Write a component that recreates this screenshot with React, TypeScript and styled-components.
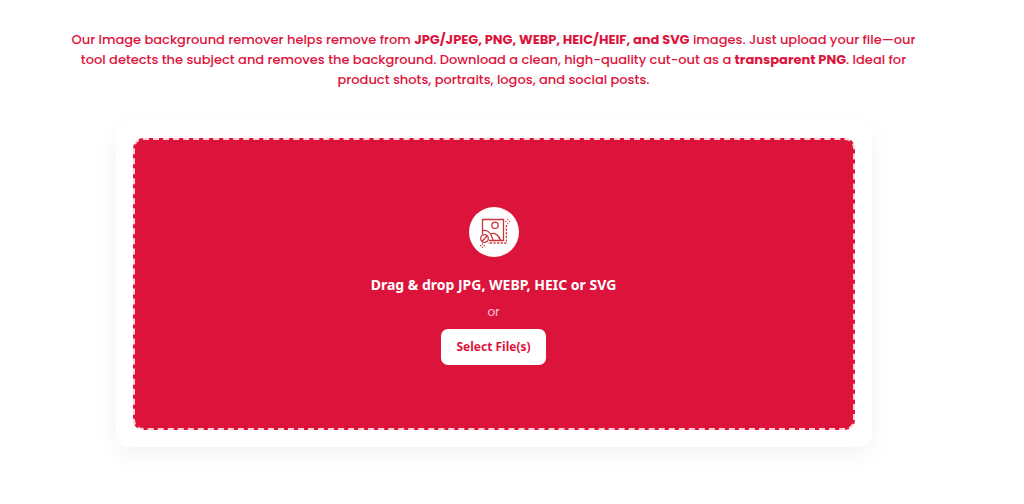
import React, { useRef } from "react";
import styled, { createGlobalStyle } from "styled-components";

const GlobalStyle = createGlobalStyle`
  *, *::before, *::after { box-sizing: border-box; }
  body {
    margin: 0;
    background: #fff;
    color: #dc143c;
    font-family: Poppins, Inter, sans-serif;
  }
`;

const Page = styled.main`
  display: flex;
  flex-direction: column;
  align-items: center;
  gap: 31px;
  padding: 30px 37px 56px 0;
`;

const Intro = styled.p`
  width: 90%;
  max-width: 872px;
  margin: 0;
  font-size: 13px;
  font-weight: 500;
  line-height: 20px;
  text-align: center;
`;

const Card = styled.section`
  width: 90%;
  max-width: 756px;
  padding: 17px;
  border-radius: 14px;
  background: #fff;
  box-shadow: 0 8px 24px rgba(0, 0, 0, 0.05);
`;

const DropZone = styled.div`
  display: flex;
  flex-direction: column;
  align-items: center;
  padding: 67px 16px 63px;
  border: 2px dashed #fbd0d9;
  border-radius: 10px;
  background: #dc143c;
  color: #fff;
  text-align: center;
`;

const IconCircle = styled.span`
  display: grid;
  place-items: center;
  width: 50px;
  height: 50px;
  border-radius: 50%;
  background: #fff;
`;

const Title = styled.h2`
  margin: 18px 0 8px;
  font: 700 14px/20px "Segoe UI", "Noto Sans", sans-serif;
`;

const Or = styled.span`
  font-size: 12px;
  line-height: 18px;
  color: #f8cdd6;
`;

const SelectButton = styled.button`
  margin-top: 8px;
  padding: 9px 15px;
  border: 0;
  border-radius: 7px;
  background: #fff;
  color: #dc143c;
  font: 700 12px/18px "Segoe UI", "Noto Sans", sans-serif;
  cursor: pointer;
`;

const RemoveBackgroundIcon = () => (
  <svg width="32" height="32" viewBox="0 0 32 32" fill="none" stroke="#c9363a" strokeWidth="1.3" aria-hidden="true">
    <path d="M4.5 18.5V3.5H25.5V24.5H11" />
    <circle cx="17" cy="9.3" r="3.2" />
    <path d="M4.5 14.5C9.5 13.5 13.5 17 15 24M12.5 17.8C17 16.5 21 19 22.5 24.5" />
    <circle cx="6.5" cy="22.5" r="3.8" />
    <path d="M4 25.2L9.2 19.8" />
    <path d="M28.4 9V27H10" strokeDasharray="2.2 1.4" />
    <path d="M29.8 2.8V4.2M29.8 6.8V8.2M27.1 5.5H28.5M31 5.5H32.4M4.5 27.3V28.7M4.5 30.7V32M2 29.6H3.4M5.6 29.6H7" strokeWidth="1.1" overflow="visible" />
  </svg>
);

export default function App() {
  const fileInput = useRef<HTMLInputElement>(null);

  return (
    <>
      <GlobalStyle />
      <Page>
        <Intro>
          Our Image background remover helps remove from{" "}
          <strong>JPG/JPEG, PNG, WEBP, HEIC/HEIF, and SVG</strong> images. Just
          upload your file—our tool detects the subject and removes the
          background. Download a clean, high-quality cut-out as a{" "}
          <strong>transparent PNG</strong>. Ideal for product shots, portraits,
          logos, and social posts.
        </Intro>
        <Card>
          <DropZone>
            <IconCircle>
              <RemoveBackgroundIcon />
            </IconCircle>
            <Title>Drag &amp; drop JPG, WEBP, HEIC or SVG</Title>
            <Or>or</Or>
            <SelectButton type="button" onClick={() => fileInput.current?.click()}>
              Select File(s)
            </SelectButton>
            <input ref={fileInput} type="file" accept="image/*" multiple hidden aria-label="Image files" />
          </DropZone>
        </Card>
      </Page>
    </>
  );
}
